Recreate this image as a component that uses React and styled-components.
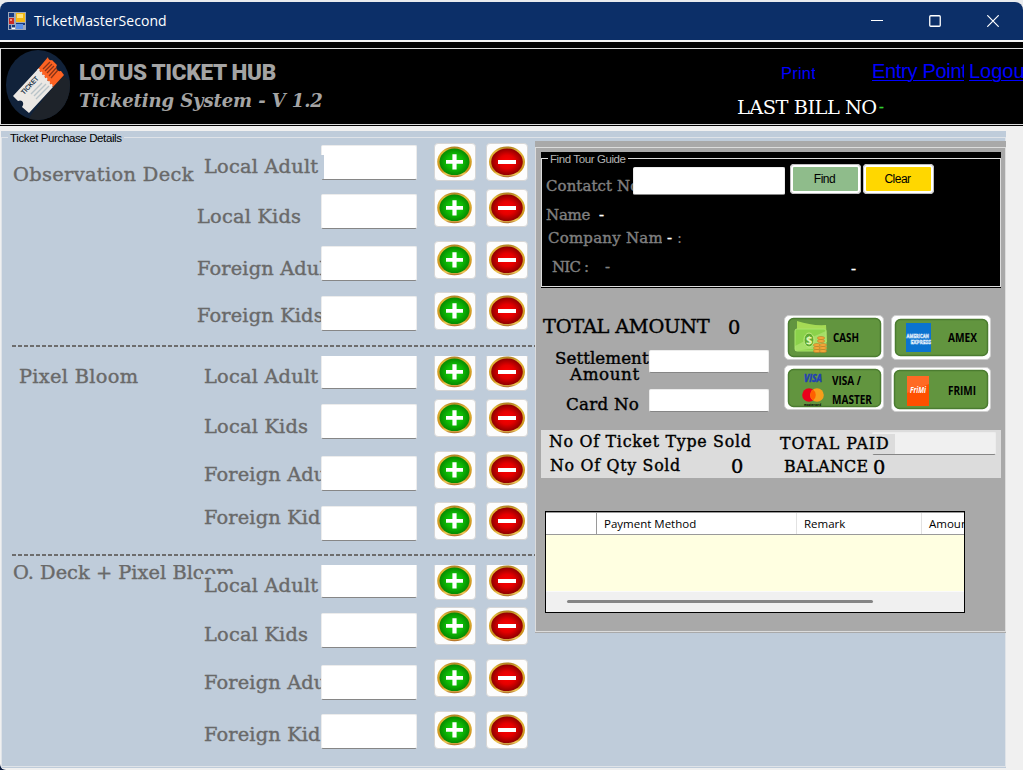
import React from "react";
import styled, { createGlobalStyle } from "styled-components";

const serif = '"DejaVu Serif", "Liberation Serif", serif';
const sans = '"Liberation Sans", Arial, sans-serif';
const ui = '"Open Sans", "Noto Sans", sans-serif';

const Global = createGlobalStyle`
  * { box-sizing: border-box; }
  html, body { margin: 0; padding: 0; }
  body { width: 1023px; height: 770px; overflow: hidden; background: #0a1a3c; }
  button, input { font: inherit; margin: 0; padding: 0; }
`;

const Screen = styled.div`
  width: 1023px;
  height: 770px;
  display: flex;
  flex-direction: column;
  background: linear-gradient(#e9ebee, #e9ebee) 0 0 / 100% 20px no-repeat #0b1c40;
  overflow: hidden;
  padding-top: 2px;
`;

const Window = styled.div`
  flex: 1;
  display: flex;
  flex-direction: column;
  background: #f0f0f0;
  border-radius: 8px 8px 0 6px;
  overflow: hidden;
`;

const TitleBar = styled.header`
  height: 38px;
  flex: none;
  display: flex;
  align-items: center;
  background: #0c2f68;
  color: #fff;
  padding-left: 8px;
`;

const WindowTitle = styled.span`
  font: 14px/20px ${ui};
  letter-spacing: 0.06px;
  margin-left: 8px;
  flex: 1;
  white-space: nowrap;
`;

const WindowControls = styled.div`
  display: flex;
  gap: 46px;
  padding-right: 24px;
  svg { display: block; width: 12px; height: 12px; fill: none; stroke: #fff; }
`;

const Banner = styled.div`
  height: 86px;
  flex: none;
  background: #000;
  border-top: 2px solid #f4f4f4;
  padding-top: 6px;
  padding-bottom: 1px;
  overflow: hidden;
`;

const BannerFrame = styled.div`
  height: 77px;
  display: flex;
  border: 1px solid #dcdcdc;
  border-right: 0;
  padding-left: 5px;
  > svg { flex: none; }
`;

const Brand = styled.div`
  width: 665px;
  flex: none;
  padding-left: 7px;
  color: #a4a4a4;
  white-space: nowrap;
`;

const BrandName = styled.div`
  font: 900 22.5px/26px Roboto, ${sans};
  letter-spacing: -0.3px;
  margin-top: 10px;
`;

const BrandSub = styled.div`
  font: italic bold 18px/24px ${serif};
  letter-spacing: -0.1px;
  margin-top: 4px;
`;

const BannerRight = styled.div`
  display: flex;
  flex-direction: column;
  width: 290px;
  flex: none;
`;

const Links = styled.nav`
  display: flex;
  height: 47px;
  padding-left: 44px;
  padding-top: 10px;
`;

const NavLink = styled.a`
  flex: none;
  width: ${(p) => p.$width}px;
  margin-right: ${(p) => p.$after || 0}px;
  height: 26px;
  overflow: hidden;
  color: #0000ff;
  font: ${(p) => p.$size}px/24px ${sans};
  letter-spacing: ${(p) => p.$spacing || 0}px;
  padding-top: ${(p) => p.$drop || 0}px;
  text-decoration: ${(p) => (p.$line ? "underline" : "none")};
  text-decoration-thickness: 1px;
  text-underline-offset: 2px;
  white-space: nowrap;
`;

const Text = styled.span`
  flex: none;
  display: block;
  position: relative;
  z-index: ${(p) => (p.$bg ? 1 : 0)};
  font-family: ${serif};
  font-size: ${(p) => (p.$size || 22) * 0.88}px;
  line-height: ${(p) => (p.$size || 22) + 2}px;
  height: ${(p) => p.$height || (p.$size || 22) + 2}px;
  letter-spacing: ${(p) => p.$spacing || 0}px;
  color: ${(p) => p.$color || "#000"};
  background: ${(p) => p.$bg || "transparent"};
  -webkit-text-stroke: ${(p) => (p.$weight === undefined ? 0.4 : p.$weight)}px currentColor;
  width: ${(p) => (p.$width ? p.$width + "px" : "auto")};
  margin-top: ${(p) => p.$top || 0}px;
  margin-left: ${(p) => p.$left || 0}px;
  margin-right: ${(p) => p.$right || 0}px;
  overflow: ${(p) => (p.$clip ? "hidden" : "visible")};
  white-space: nowrap;
`;

const BillRow = styled.div`
  display: flex;
`;

const Workspace = styled.main`
  width: 1006px;
  height: 637px;
  flex: none;
  margin-top: 5px;
  padding: 6px 0 1px 1px;
  background: linear-gradient(#bfccda, #bfccda) 1px 0 no-repeat;
`;

const WorkFrame = styled.div`
  height: 630px;
  display: flex;
  position: relative;
  border: 1px solid #dfe3e8;
`;

const Legend = styled.span`
  position: absolute;
  left: ${(p) => p.$left}px;
  top: -7px;
  padding: 0 2px;
  background: ${(p) => p.$bg};
  color: ${(p) => p.$color};
  font: 11.5px/14px ${sans};
  letter-spacing: ${(p) => p.$spacing}px;
  white-space: nowrap;
`;

const Tickets = styled.section`
  width: 533px;
  flex: none;
  padding-top: 5px;
`;

const TicketGroup = styled.div`
  overflow: hidden;
`;

const Divider = styled.div`
  height: 2px;
  margin: 0 0 9px 10px;
  background: repeating-linear-gradient(90deg, #6d6d6d 0 4px, transparent 4px 6px);
`;

const TicketRow = styled.div`
  display: flex;
  height: ${(p) => p.$height}px;
  padding-left: 11px;
`;

const TitleCell = styled.div`
  width: ${(p) => p.$width}px;
  flex: none;
`;

const LabelCell = styled.div`
  width: ${(p) => p.$width}px;
  height: 24px;
  flex: none;
  padding-left: 3px;
  margin-top: ${(p) => p.$top}px;
  margin-right: ${(p) => (p.$over ? -3 : 0)}px;
  position: relative;
  z-index: ${(p) => (p.$over ? 1 : 0)};
  background: #bfccda;
  overflow: hidden;
`;

const Field = styled.input`
  flex: none;
  display: block;
  width: ${(p) => p.$width}px;
  height: ${(p) => p.$height}px;
  margin-top: ${(p) => p.$top || 0}px;
  border: 1px solid #ececec;
  border-bottom-color: #868686;
  border-radius: 2px;
  background: ${(p) => p.$bg || "#fff"};
  outline: 0;
`;

const StepButton = styled.button`
  flex: none;
  width: 42px;
  height: 38px;
  margin-top: ${(p) => p.$top}px;
  margin-left: ${(p) => p.$left}px;
  background: #fdfdfd;
  border: 1px solid #d6d6d6;
  border-radius: 4px;
  svg { display: block; width: 40px; height: 36px; }
`;

const PayPanel = styled.section`
  width: 471px;
  height: 492px;
  flex: none;
  margin: 3px -1px 0 0;
  padding: 6px 0 1px;
  background: #a9a9a9;
  position: relative;
`;

const PayFrame = styled.div`
  height: 485px;
  border: 1px solid #dcdcdc;
  padding: 4px 4px 0 5px;
`;

const Guide = styled.div`
  height: 136px;
  background: #000;
  padding: 6px 0 1px;
`;

const GuideFrame = styled.div`
  position: relative;
  height: 129px;
  border: 1px solid #dcdcdc;
`;

const GuideRow = styled.div`
  display: flex;
  height: ${(p) => p.$height}px;
  padding-left: ${(p) => p.$left}px;
`;

const ActionButton = styled.button`
  flex: none;
  width: 71px;
  height: 30px;
  margin: 5px 0 0 ${(p) => p.$left}px;
  border: 3px solid #fff;
  outline: 1px solid #bdbdbd;
  outline-offset: -1px;
  border-radius: 4px;
  background: ${(p) => p.$bg};
  color: #000;
  font: 12px/22px ${sans};
  letter-spacing: -0.5px;
  padding-right: 2px;
`;

const Totals = styled.div`
  height: 142px;
  display: flex;
  padding-top: 27px;
`;

const AmountForm = styled.div`
  width: 243px;
  flex: none;
`;

const FormRow = styled.div`
  display: flex;
  height: ${(p) => p.$height}px;
`;

const FormLabel = styled.div`
  width: 108px;
  flex: none;
`;

const PayColumn = styled.div`
  display: flex;
  flex-direction: column;
  gap: ${(p) => p.$gap}px;
  width: 107px;
`;

const PayButton = styled.button`
  flex: none;
  width: 100px;
  height: 45px;
  padding: 0;
  border: 1px solid #cfcfcf;
  border-radius: 5px;
  background: #fff;
  svg { display: block; width: 98px; height: 43px; }
  text { font-family: "Open Sans", sans-serif; font-weight: 700; }
`;

const Summary = styled.div`
  height: 48px;
  background: #dcdcdc;
  display: flex;
`;

const SummaryCol = styled.div`
  width: ${(p) => p.$width}px;
  flex: none;
`;

const SummaryRow = styled.div`
  display: flex;
  height: 24px;
`;

const PaymentTable = styled.div`
  width: 420px;
  height: 102px;
  margin: 33px 0 0 4px;
  border: 1px solid #000;
  background: #ffffe1;
  display: flex;
  flex-direction: column;
`;

const TableHead = styled.div`
  display: flex;
  height: 23px;
  flex: none;
  background: #fff;
  border-top: 1px solid #9a9a9a;
  border-bottom: 1px solid #9a9a9a;
  overflow: hidden;
`;

const HeadCell = styled.div`
  width: ${(p) => p.$width}px;
  flex: none;
  padding-left: 7px;
  border-right: 1px solid ${(p) => p.$line || "#e2e2e2"};
  font: 11.5px/22px ${ui};
  color: #000;
  white-space: nowrap;
`;

const ScrollTrack = styled.div`
  height: 21px;
  margin-top: auto;
  background: #f0f0f0;
  border-top: 1px solid #fafafa;
  padding: 8px 0 0 21px;
`;

const ScrollThumb = styled.div`
  width: 306px;
  height: 3px;
  border-radius: 2px;
  background: #858585;
`;

function AppIcon() {
  return (
    <svg width="18" height="18" viewBox="0 0 18 18">
      <rect width="18" height="18" fill="#9ca7ba" />
      <path d="M1 1h5v4H1zM1 13h2v4H1zM4 13h3v2H4zM8 11h9v2H8z" fill="#173b80" />
      <rect x="8" y="1" width="9" height="9" fill="#f3b814" />
      <path d="M9 2h6v4H9z" fill="#ffe27a" />
      <rect x="1" y="6" width="5" height="6" fill="#c92a25" />
      <path d="M2 7h2v2H2z" fill="#f58b7e" />
      <rect x="8" y="12" width="7" height="5" fill="#5b91ea" />
      <path d="M4 16h3v1H4z" fill="#fff" />
    </svg>
  );
}

function TicketLogo() {
  return (
    <svg width="66" height="74" viewBox="0 0 66 74">
      <defs>
        <clipPath id="disc"><ellipse cx="32" cy="36" rx="32" ry="35" /></clipPath>
      </defs>
      <g clipPath="url(#disc)">
        <path d="M0 0h66v74H0z" fill="#11223a" />
        <path d="M27 63L57 26l10 8v40H20z" fill="#1e232a" />
      </g>
      <path d="M32 20L7 47l5 5c4-2 7 2 4 6l7 6 24-26z" fill="#ebe8e4" />
      <path d="M42 8L32 20l15 18 11-12-3-4c-4 1-6-3-4-6l-5-5c-2 1-4-1-4-3z" fill="#fd6222" />
      <path d="M32 20l15 18" stroke="#ebe8e4" strokeWidth="2" strokeDasharray="2 2" />
      <path d="M37 20l7-7M39 22l7-7M41 24l7-7M43 27l7-8M45 29l7-8" stroke="#8a3417" strokeWidth="1.3" />
      <path d="M28 47l12-12M25 45l11-11M30 50l13-13" stroke="#b9c4c9" strokeWidth="1.4" />
      <text transform="translate(18 46) rotate(-47)" fontSize="7" fontWeight="700" fontFamily="Liberation Sans, sans-serif" textLength="22" lengthAdjust="spacingAndGlyphs" fill="#26384a">TICKET</text>
    </svg>
  );
}

function StepIcon({ plus }) {
  const id = plus ? "greenDisc" : "redDisc";
  return (
    <svg viewBox="0 0 40 36">
      <defs>
        <radialGradient id={id}>
          <stop offset="0" stopColor={plus ? "#12cf08" : "#ff0000"} />
          <stop offset=".5" stopColor={plus ? "#0fbd06" : "#e30000"} />
          <stop offset="1" stopColor={plus ? "#058a00" : "#8e0000"} />
        </radialGradient>
        <linearGradient id={id + "Rim"} x2="0" y2="1">
          <stop offset="0" stopColor="#a8791c" />
          <stop offset=".15" stopColor="#e2b93c" />
          <stop offset=".8" stopColor="#c98c18" />
          <stop offset=".9" stopColor="#f2cf60" />
          <stop offset="1" stopColor="#a8601c" />
        </linearGradient>
      </defs>
      <ellipse cx={plus ? 19.5 : 20} cy="17.8" rx={plus ? 17.3 : 18} ry="15.4" fill={`url(#${id}Rim)`} />
      <ellipse cx={plus ? 19.5 : 20} cy="17.8" rx={plus ? 15 : 15.8} ry="13.3" fill={`url(#${id})`} />
      <path d={plus ? "M11 16h6.4V10.3h4.2V16H28v3.8h-6.4v5.7h-4.2v-5.7H11z" : "M11 16h18v4H11z"} fill="#fff" />
    </svg>
  );
}

function PayArt({ kind }) {
  const box = {
    cash: [3, 2, 93, 39],
    amex: [3, 3, 93, 37],
    visa: [3, 3, 93, 38],
    frimi: [2, 2, 94, 39],
  }[kind];
  return (
    <svg viewBox="0 0 98 43">
      <rect x={box[0] + 0.5} y={box[1] + 0.5} width={box[2] - 1} height={box[3] - 1} rx="5" fill="#62953f" stroke="#4b7c30" strokeWidth="1.5" />
      {kind === "cash" && (
        <g>
          <path d="M12 5q15 5 29 4l1 17-30 3z" fill="#a6da55" />
          <rect x="10" y="13" width="31" height="22" rx="2" fill="#8bd24b" stroke="#a9e36d" />
          <path d="M10 30q14-8 31-15v18q-14-1-31 2z" fill="#b7e77c" opacity=".6" />
          <ellipse cx="24" cy="24" rx="5" ry="7" fill="#60ab31" stroke="#c3ed83" />
          <text x="21" y="28" fontSize="11" fill="#e3f7b5">$</text>
          <g fill="#f2a93a" stroke="#b66a1d" strokeWidth=".5">
            <ellipse cx="32" cy="35" rx="3.6" ry="1.5" /><ellipse cx="32" cy="32" rx="3.6" ry="1.5" /><ellipse cx="32" cy="29" rx="3.6" ry="1.5" />
            <ellipse cx="38" cy="35" rx="3.6" ry="1.5" /><ellipse cx="38" cy="32" rx="3.6" ry="1.5" /><ellipse cx="38" cy="29" rx="3.6" ry="1.5" /><ellipse cx="36" cy="25" rx="3.6" ry="1.5" /><ellipse cx="36" cy="22" rx="3.6" ry="1.5" />
          </g>
          <text x="48" y="26" fontSize="12" textLength="26" lengthAdjust="spacingAndGlyphs">CASH</text>
        </g>
      )}
      {kind === "amex" && (
        <g>
          <rect x="14" y="7" width="25" height="29" fill="#0b73d0" />
          <g fill="none" stroke="#e3f0fb" strokeWidth=".6" fontSize="6">
            <text x="14.5" y="21.5" textLength="22.5" lengthAdjust="spacingAndGlyphs">AMERICAN</text>
            <text x="18.5" y="27.5" textLength="20.5" lengthAdjust="spacingAndGlyphs">EXPRESS</text>
          </g>
          <text x="56" y="26" fontSize="12" textLength="29" lengthAdjust="spacingAndGlyphs">AMEX</text>
        </g>
      )}
      {kind === "visa" && (
        <g>
          <text x="19" y="16" fontSize="10" fontStyle="italic" fill="#233fb5" stroke="#233fb5" strokeWidth=".5" textLength="18" lengthAdjust="spacingAndGlyphs">VISA</text>
          <circle cx="24" cy="29" r="6.8" fill="#eb001b" />
          <circle cx="32" cy="29" r="6.8" fill="#f79e1b" />
          <path d="M28 23.5a6.8 6.8 0 0 1 0 11a6.8 6.8 0 0 1 0-11" fill="#ff5f00" />
          <text x="19" y="40" fontSize="4" textLength="17" lengthAdjust="spacingAndGlyphs">mastercard</text>
          <text x="47" y="19" fontSize="12" textLength="29" lengthAdjust="spacingAndGlyphs">VISA /</text>
          <text x="47" y="38" fontSize="12" textLength="40" lengthAdjust="spacingAndGlyphs">MASTER</text>
        </g>
      )}
      {kind === "frimi" && (
        <g>
          <rect x="15" y="8" width="22" height="30" fill="#ff5000" />
          <path d="M15 8h22v8l-22 9z" fill="#ff6a24" />
          <text x="18" y="25" fontSize="8" fontStyle="italic" fill="#fff" textLength="16" lengthAdjust="spacingAndGlyphs">FriMi</text>
          <text x="56" y="27" fontSize="12" textLength="28" lengthAdjust="spacingAndGlyphs">FRIMI</text>
        </g>
      )}
    </svg>
  );
}

const groups = [
  {
    title: { text: "Observation Deck", top: 20, left: 0, spacing: 0.35 },
    rows: [
      { label: "Local Adult", x: 201, height: 45, labelTop: 12, field: 2, step: 0, over: true },
      { label: "Local Kids", x: 194, height: 52, labelTop: 17, field: 6, step: 1 },
      { label: "Foreign Adult", x: 194, height: 51, labelTop: 17, field: 6, step: 1 },
      { label: "Foreign Kids", x: 194, height: 54, labelTop: 13, field: 5, step: 1 },
    ],
  },
  {
    title: { text: "Pixel Bloom", top: 9, left: 6, spacing: 0.3 },
    rows: [
      { label: "Local Adult", x: 201, height: 42, labelTop: 9, field: -2, step: -3 },
      { label: "Local Kids", x: 201, height: 52, labelTop: 17, field: 6, step: 1 },
      { label: "Foreign Adult", x: 201, height: 51, labelTop: 13, field: 6, step: 1 },
      { label: "Foreign Kids", x: 201, height: 53, labelTop: 5, field: 5, step: 1 },
    ],
  },
  {
    title: { text: "O. Deck + Pixel Bloom", top: -4, left: 0, spacing: 0.02 },
    rows: [
      { label: "Local Adult", x: 201, height: 41, labelTop: 9, field: -2, step: -3 },
      { label: "Local Kids", x: 201, height: 52, labelTop: 17, field: 7, step: 1 },
      { label: "Foreign Adult", x: 201, height: 52, labelTop: 13, field: 7, step: 1 },
      { label: "Foreign Kids", x: 201, height: 55, labelTop: 13, field: 4, step: 1 },
    ],
  },
];

function TicketLine({ row, title }) {
  return (
    <TicketRow $height={row.height}>
      <TitleCell $width={row.x - 13}>
        {title && (
          <Text $color="#696969" $spacing={title.spacing} $top={title.top} $left={title.left}>
            {title.text}
          </Text>
        )}
      </TitleCell>
      <LabelCell $width={321 - row.x + (row.over ? 3 : 0)} $top={row.labelTop} $over={row.over}>
        <Text $color="#696969" $spacing={row.label[0] === "F" ? 0.15 : 0.2}>{row.label}</Text>
      </LabelCell>
      <Field $width={96} $height={35} $top={row.field} aria-label={row.label} />
      <StepButton $top={row.step} $left={17} aria-label="Add"><StepIcon plus /></StepButton>
      <StepButton $top={row.step} $left={10} aria-label="Remove"><StepIcon /></StepButton>
    </TicketRow>
  );
}

export default function App() {
  return (
    <Screen>
      <Global />
      <Window>
        <TitleBar>
          <AppIcon />
          <WindowTitle>TicketMasterSecond</WindowTitle>
          <WindowControls>
            <svg viewBox="0 0 12 12"><path d="M0 5.5h12" /></svg>
            <svg viewBox="0 0 12 12"><rect x=".75" y=".75" width="10.5" height="10.5" rx="1" strokeWidth="1.3" /></svg>
            <svg viewBox="0 0 12 12"><path d="M.3.3l11.4 11.4M11.7.3L.3 11.7" strokeWidth="1.2" /></svg>
          </WindowControls>
        </TitleBar>
        <Banner>
          <BannerFrame>
            <TicketLogo />
            <Brand>
              <BrandName>LOTUS TICKET HUB</BrandName>
              <BrandSub>Ticketing System - V 1.2</BrandSub>
            </Brand>
            <BannerRight>
              <Links>
                <NavLink $width={34} $after={57} $size={16.5} $drop={2} $spacing={0.2}>Print</NavLink>
                <NavLink $width={92} $after={5} $size={20} $spacing={-0.3} $line>Entry Point</NavLink>
                <NavLink $width={60} $size={20} $line>Logout</NavLink>
              </Links>
              <BillRow>
                <Text $width={142} $spacing={-0.5} $color="#fff" $weight={0}>LAST BILL NO</Text>
                <Text $size={16} $top={2} $color="#32cd32">-</Text>
              </BillRow>
            </BannerRight>
          </BannerFrame>
        </Banner>
        <Workspace>
          <WorkFrame>
            <Legend $left={6} $bg="#bfccda" $color="#000" $spacing={-0.38}>Ticket Purchase Details</Legend>
            <Tickets>
              {groups.map((group, index) => (
                <React.Fragment key={group.title.text}>
                  {index > 0 && <Divider />}
                  <TicketGroup>
                    {group.rows.map((row, i) => (
                      <TicketLine key={row.label} row={row} title={i === 0 ? group.title : null} />
                    ))}
                  </TicketGroup>
                </React.Fragment>
              ))}
            </Tickets>
            <PayPanel>
              <PayFrame>
                <Guide>
                  <GuideFrame>
                    <Legend $left={6} $bg="#000" $color="#b4b4b4" $spacing={-0.4}>Find Tour Guide</Legend>
                    <GuideRow $height={47} $left={4}>
                      <Text $size={17} $top={18} $width={87} $clip $spacing={0.1} $color="#808080">Contatct No</Text>
                      <Field $width={152} $height={28} $top={8} aria-label="Contact" />
                      <ActionButton $left={5} $bg="#8fbc8b">Find</ActionButton>
                      <ActionButton $left={2} $bg="#ffd700">Clear</ActionButton>
                    </GuideRow>
                    <GuideRow $height={23} $left={4}>
                      <Text $size={17} $width={53} $spacing={-0.2} $color="#808080">Name</Text>
                      <Text $size={17} $color="#fff">-</Text>
                    </GuideRow>
                    <GuideRow $height={29} $left={6}>
                      <Text $size={17} $width={114} $clip $spacing={0.25} $color="#808080">Company Name</Text>
                      <Text $size={17} $left={5} $width={10} $color="#fff">-</Text>
                      <Text $size={17} $color="#808080" $weight={0}>:</Text>
                    </GuideRow>
                    <GuideRow $height={20} $left={10}>
                      <Text $size={17} $width={53} $spacing={-0.8} $color="#808080">NIC :</Text>
                      <Text $size={17} $width={246} $color="#808080">-</Text>
                      <Text $size={17} $top={2} $color="#fff">-</Text>
                    </GuideRow>
                  </GuideFrame>
                </Guide>
                <Totals>
                  <AmountForm>
                    <FormRow $height={33}>
                      <Text $left={2} $width={185} $spacing={-0.25}>TOTAL AMOUNT</Text>
                      <Text $top={1}>0</Text>
                    </FormRow>
                    <FormRow $height={41}>
                      <FormLabel>
                        <Text $size={19} $left={14} $height={16} $clip $spacing={0.05}>Settlement</Text>
                        <Text $size={19} $left={29} $spacing={0.6}>Amount</Text>
                      </FormLabel>
                      <Field $width={120} $height={23} $top={2} aria-label="Settlement Amount" />
                    </FormRow>
                    <FormRow $height={28}>
                      <FormLabel>
                        <Text $size={19} $left={25} $top={5} $spacing={0.25}>Card No</Text>
                      </FormLabel>
                      <Field $width={120} $height={23} aria-label="Card No" />
                    </FormRow>
                  </AmountForm>
                  <PayColumn $gap={5}>
                    <PayButton aria-label="Cash"><PayArt kind="cash" /></PayButton>
                    <PayButton aria-label="Visa / Master"><PayArt kind="visa" /></PayButton>
                  </PayColumn>
                  <PayColumn $gap={7}>
                    <PayButton aria-label="Amex"><PayArt kind="amex" /></PayButton>
                    <PayButton aria-label="Frimi"><PayArt kind="frimi" /></PayButton>
                  </PayColumn>
                </Totals>
                <Summary>
                  <SummaryCol $width={239}>
                    <SummaryRow><Text $size={18} $left={8} $top={2} $spacing={0.72}>No Of Ticket Type Sold</Text></SummaryRow>
                    <SummaryRow>
                      <Text $size={18} $left={9} $top={2} $width={181} $spacing={0.7}>No Of Qty Sold</Text>
                      <Text $top={1}>0</Text>
                    </SummaryRow>
                  </SummaryCol>
                  <SummaryCol $width={221}>
                    <SummaryRow>
                      <Text $size={18} $top={4} $width={115} $right={-23} $bg="#dcdcdc" $spacing={1}>TOTAL PAID</Text>
                      <Field $width={124} $height={23} $top={2} $bg="#f0f0f0" aria-label="Total Paid" />
                    </SummaryRow>
                    <SummaryRow>
                      <Text $size={18} $left={4} $top={3} $width={89} $spacing={0.25}>BALANCE</Text>
                      <Text $top={2}>0</Text>
                    </SummaryRow>
                  </SummaryCol>
                </Summary>
                <PaymentTable>
                  <TableHead>
                    <HeadCell $width={51} $line="#9a9a9a" />
                    <HeadCell $width={200}>Payment Method</HeadCell>
                    <HeadCell $width={125}>Remark</HeadCell>
                    <HeadCell $width={100}>Amount</HeadCell>
                  </TableHead>
                  <ScrollTrack><ScrollThumb /></ScrollTrack>
                </PaymentTable>
              </PayFrame>
            </PayPanel>
          </WorkFrame>
        </Workspace>
      </Window>
    </Screen>
  );
}
